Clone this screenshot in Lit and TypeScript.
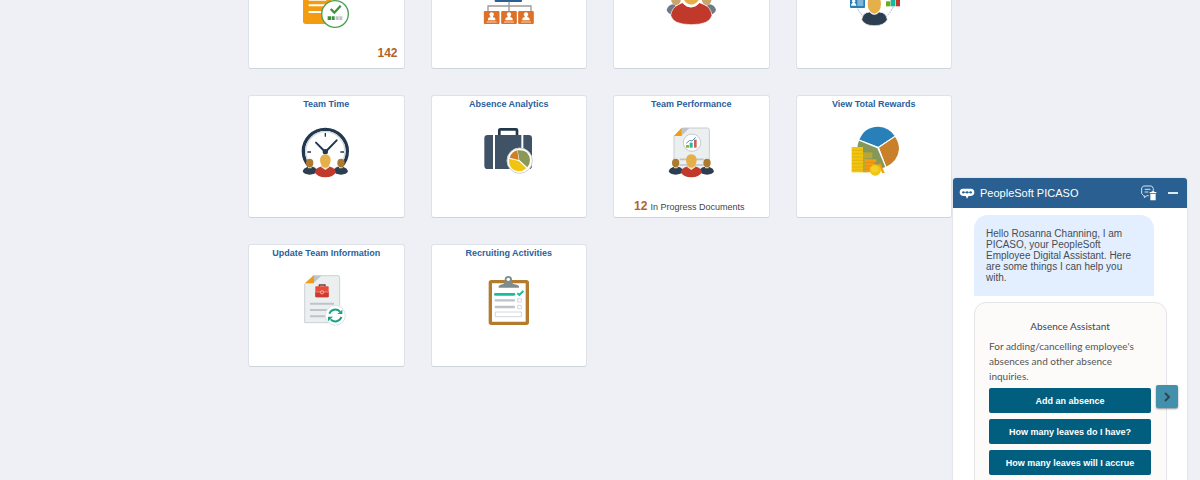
import { LitElement, html, css, svg, nothing, type TemplateResult } from "lit";
import { customElement, property } from "lit/decorators.js";

interface Tile {
  title?: string;
  label: string;
  icon: TemplateResult;
  count?: number;
  note?: string;
}

const icon = (x: number, y: number, body: TemplateResult) =>
  html`<svg class="icon" viewBox="${x} ${y} 168 168" aria-hidden="true">${body}</svg>`;

const checklist = icon(177, -81, svg`
  <path d="M192-60H276V72H200Q192 72 192 64Z" fill="#f39c12"/>
  <path d="M209-1H262M209 16H262M209 36H250" stroke="#fff" stroke-width="6"/>
  <circle cx="288" cy="42" r="40" fill="#fff" stroke="#4c9f50" stroke-width="4"/>
  <path d="M275 27L286 38L305 17" fill="none" stroke="#3f9142" stroke-width="7"/>
  <path d="M266 49h10v11h-10zM278 49h9v11h-9z" fill="#3f9142"/>
  <path d="M290 49h9v11h-9zM301 49h9v11h-9z" fill="#bfc4c4"/>`);

const orgChart = icon(723, -81, svg`
  <rect x="764" y="-40" width="82" height="46" rx="3" fill="#2c5f93"/>
  <path d="M807 5V34M744 34V18H873V34" fill="none" stroke="#9a9a9a" stroke-width="4"/>
  ${[755, 807, 858].map((x) => svg`
    <rect x=${x - 23.5} y="33" width="47" height="39" rx="3" fill="#de7128"/>
    <circle cx=${x} cy="43" r="6.5" fill="#fff"/>
    <path d="M${x - 11} 61V56Q${x - 9} 52 ${x - 4} 52V48H${x + 4}V52Q${x + 9} 52 ${x + 11} 56V61Z" fill="#fff"/>
    <path d="M${x - 15} 66H${x + 15}" stroke="#f6d0b6" stroke-width="3"/>`)}`);

const people = icon(189, -81, svg`
  <ellipse cx="228" cy="-5" rx="15" ry="21" fill="#c9a46c"/>
  <ellipse cx="320" cy="-5" rx="15" ry="21" fill="#c9a46c"/>
  <path d="M200 29Q206 14 219 13L236 22V44H216Q202 40 200 29ZM348 29Q342 14 329 13L312 22V44H332Q346 40 348 29Z" fill="#6d7b88"/>
  <path d="M212 46Q216 22 235 14L247 8Q273 35 299 8L313 14Q332 22 336 46Q330 74 274 74Q218 74 212 46Z" fill="#c0392b" stroke="#fff" stroke-width="2"/>
  <ellipse cx="274" cy="-20" rx="27" ry="34" fill="#e5b04a"/>`);

const profile = icon(735, -81, svg`
  <path d="M766 20Q790 65 820 65Q858 62 878 18" fill="none" stroke="#a8acb8" stroke-width="3" stroke-dasharray="5 3"/>
  <rect x="747" y="-22" width="45" height="46" rx="3" fill="#2980b9"/>
  <circle cx="758" cy="4" r="5" fill="#fff"/>
  <path d="M750 17Q751 8 758 8Q765 8 766 17Z" fill="#fff"/>
  <path d="M769 3H787M769 9H787M769 15H787" stroke="#d8eaf6" stroke-width="3"/>
  <path d="M855 4h13v15h-13z" fill="#69ad17"/>
  <path d="M869-20h13v39h-13z" fill="#16b99a"/>
  <path d="M884-2h13v21h-13z" fill="#c0392b"/>
  <path d="M782 59Q784 43 796 38L806 36Q820 51 834 36L845 38Q857 43 859 59Q850 77 820 77Q790 77 782 59Z" fill="#2c3e50" stroke="#fff" stroke-width="2"/>
  <ellipse cx="820" cy="12" rx="20" ry="29" fill="#e5b04a"/>`);

const team = (x: number) => svg`
  <g transform="translate(${x} 0)">
    <path d="M-68 244Q-66 235-56 232L-47 230L-34 232Q-25 236-25 244Q-30 254-47 254Q-64 254-68 244Z" fill="#2c3e50"/>
    <path d="M68 244Q66 235 56 232L47 230L34 232Q25 236 25 244Q30 254 47 254Q64 254 68 244Z" fill="#2c3e50"/>
    <path d="M-52 225h11v10h-11zM41 225h11v10H41z" fill="#dcd3b6"/>
    <ellipse cx="-47" cy="219" rx="11" ry="12.5" fill="#ad7b30"/>
    <ellipse cx="47" cy="219" rx="11" ry="12.5" fill="#ad7b30"/>
    <path d="M-32 247Q-29 234-14 230L-8 225H8L14 230Q29 234 32 247Q24 262 0 262Q-24 262-32 247Z" fill="#c0392b"/>
    <path d="M-14 230L-8 226H8L14 230L0 240Z" fill="#f3e3c4"/>
    <path d="M0 193Q16 194 16 211Q14 226 8 230Q0 236-8 230Q-14 226-16 211Q-16 194 0 193Z" fill="#e5b04a"/>
  </g>`;

const clock = icon(57, 96, svg`
  <circle cx="139" cy="184" r="66" fill="#fff" stroke="#22384f" stroke-width="10"/>
  <circle cx="139" cy="184" r="59" fill="none" stroke="#d4d7da" stroke-width="4"/>
  <path d="M139 129V140M85 186H96M184 186H195" stroke="#22384f" stroke-width="4"/>
  <path d="M111 158L139 186L173 151" fill="none" stroke="#22384f" stroke-width="6" stroke-linecap="round"/>
  <circle cx="139" cy="185" r="8" fill="#22384f"/>
  ${team(139)}`);

const suitcase = icon(63, 96, svg`
  <path d="M118 138V121Q118 118 122 118H168Q171 118 171 121V138" fill="none" stroke="#22384a" stroke-width="8"/>
  <rect x="73" y="135" width="143" height="102" rx="10" fill="#3f5266"/>
  <path d="M102 135V237M187 135V237" stroke="#fff" stroke-width="6"/>
  <circle cx="179" cy="212" r="38" fill="#fff" stroke="#ccd1ce" stroke-width="3"/>
  <path d="M176 210L149 203Q155 185 172 181Z" fill="#d07f24"/>
  <path d="M178 210L173 181Q206 178 210 209Q210 223 202 232Z" fill="#8a9a56"/>
  <path d="M176 213L199 235Q188 245 174 244Q145 239 147 206Z" fill="#f1c40f"/>`);

const performance = icon(159, 96, svg`
  <path d="M217 114H293Q298 114 298 119V238H192V139Z" fill="#eceff0" stroke="#c9cdd0" stroke-width="3"/>
  <path d="M215 114H238L214 138Z" fill="#bfc4c8"/>
  <path d="M215 113V138H192Z" fill="#f39c12"/>
  <circle cx="246" cy="158" r="26" fill="#fff" stroke="#c6cacc" stroke-width="3"/>
  <path d="M228 165h9v8h-9z" fill="#7fb93c"/><path d="M239 158h9v15h-9z" fill="#26b899"/><path d="M252 149h8v24h-8z" fill="#cf6159"/>
  <path d="M229 160L239 151L246 153L257 142" fill="none" stroke="#4d8fc0" stroke-width="3"/>
  <path d="M209 208H281M209 225H281" stroke="#bdc3c7" stroke-width="5"/>
  ${team(244)}`);

const rewards = icon(75, 96, svg`
  <path d="M171 171L115 150Q129 111 172 110Q205 112 221 138Z" fill="#2980b9"/>
  <path d="M174 173L222 140Q234 158 234 178Q230 215 195 230Z" fill="#c9802b"/>
  <path d="M169 175L193 231Q180 237 165 235Q110 225 109 175Q110 160 114 152Z" fill="#84985a"/>
  <path d="M172 172L115 150M172 172L222 139M172 172L195 231" stroke="#fff" stroke-width="3"/>
  <path d="M92 171h34v76h-34z" fill="#f1c40f"/>
  <path d="M126 187h28v18h-28z" fill="#b8a636"/><path d="M126 205h10v42h-10z" fill="#b8a636"/>
  <path d="M92 181h34M92 191h34M92 201h34M92 211h34M92 221h34M92 231h34M92 240h34" stroke="#d9ac12" stroke-width="2"/>
  <path d="M132 208H166V217H160V247H132Z" fill="#f39c12"/>
  <path d="M132 218H164M132 228H155M132 238H155" stroke="#db8512" stroke-width="2"/>
  <path d="M171 221L178 220L191 248L184 250Z" fill="#f39c12"/>
  <circle cx="163" cy="240" r="17" fill="#f1c40f"/><circle cx="161" cy="238" r="10" fill="#f5cf2c"/>`);

const documentSync = icon(117, 93, svg`
  <path d="M163 107H237Q242 107 242 112V248H137V132Z" fill="#eceff0" stroke="#cdd1d3" stroke-width="3"/>
  <path d="M163 107H187L163 130Z" fill="#bfc4c8"/>
  <path d="M165 106V130H138Z" fill="#f39c12"/>
  <path d="M181 140V135H198V140" fill="none" stroke="#5d4644" stroke-width="4"/>
  <rect x="169" y="139" width="40" height="33" rx="3" fill="#e74c3c"/>
  <path d="M169 156H209V169Q209 172 206 172H172Q169 172 169 169Z" fill="#ca3c2f"/>
  <path d="M171 156H208" stroke="#f1a69e" stroke-width="2"/><circle cx="189" cy="157" r="5" fill="#e74c3c" stroke="#f8d3cf" stroke-width="2"/>
  <path d="M153 191H225M153 210H205M153 229H200" stroke="#bdc3c7" stroke-width="6"/>
  <circle cx="229" cy="226" r="30" fill="#fff" stroke="#dfe1e2" stroke-width="3"/>
  <path d="M211 221A19 19 0 0 1 243 215M247 231A19 19 0 0 1 215 238" fill="none" stroke="#16a085" stroke-width="6"/>
  <path d="M250 209V222H235ZM207 244V230H222Z" fill="#16a085"/>`);

const clipboard = icon(93, 93, svg`
  <rect x="121" y="125" width="111" height="125" rx="3" fill="#fff" stroke="#b27b2d" stroke-width="10"/>
  <path d="M146 143V138Q150 133 160 132Q165 130 164 119A11 11 0 0 1 186 119Q185 130 190 132Q202 133 207 138V143Z" fill="#7f8c8d"/>
  <circle cx="175" cy="118" r="5" fill="#fff"/>
  <path d="M136 163H192" stroke="#1abc9c" stroke-width="8" stroke-linecap="round"/>
  <path d="M202 160L208 165L220 153" fill="none" stroke="#1abc9c" stroke-width="6"/>
  <path d="M137 181H192M137 201H192" stroke="#bdc3c7" stroke-width="7" stroke-linecap="round"/>
  <path d="M203 176h11v10h-11zM203 196h11v10h-11zM136 216h78v14h-78z" fill="#fff" stroke="#d3d7d9" stroke-width="3"/>`);

const tiles: Tile[] = [
  { label: "Approvals", icon: checklist, count: 142 },
  { label: "Organization", icon: orgChart },
  { label: "Team", icon: people },
  { label: "Profile", icon: profile },
  { label: "Team Time", title: "Team Time", icon: clock },
  { label: "Absence Analytics", title: "Absence Analytics", icon: suitcase },
  { label: "Team Performance", title: "Team Performance", icon: performance, count: 12, note: "In Progress Documents" },
  { label: "View Total Rewards", title: "View Total Rewards", icon: rewards },
  { label: "Update Team Information", title: "Update Team Information", icon: documentSync },
  { label: "Recruiting Activities", title: "Recruiting Activities", icon: clipboard },
];

@customElement("home-tile")
export class HomeTile extends LitElement {
  @property({ attribute: false }) tile!: Tile;

  static styles = css`
    :host { display: block; min-width: 0; }
    .tile {
      box-sizing: border-box;
      height: 100%;
      display: grid;
      grid-template-rows: 26px 56px 1fr;
      justify-items: center;
      background: #fff;
      border: 1px solid #dde2e8;
      border-bottom-color: #ccd5db;
      border-radius: 3px;
      color: #444;
      text-decoration: none;
    }
    .title { font-size: 9px; line-height: 17px; font-weight: 700; color: #2a5f9e; margin: 0; white-space: nowrap; }
    .icon { width: 56px; height: 56px; }
    .foot { align-self: end; display: flex; align-items: baseline; gap: 3px; font-size: 9px; line-height: 20px; white-space: nowrap; padding-right: 4px; }
    .end { justify-self: end; padding-right: 6px; line-height: 30px; }
    .count { font-size: 12px; font-weight: 700; color: #b0642a; }
  `;

  render() {
    const t = this.tile;
    return html`<a class="tile" href="#" aria-label=${t.label}>
      <h2 class="title">${t.title ?? nothing}</h2>
      ${t.icon}
      ${t.count
        ? html`<span class="foot ${t.note ? "" : "end"}"><span class="count">${t.count}</span>${t.note ?? nothing}</span>`
        : nothing}
    </a>`;
  }
}

@customElement("chat-panel")
export class ChatPanel extends LitElement {
  static styles = css`
    :host { display: flex; flex-direction: column; background: #fff; border-radius: 3px 3px 0 0; box-shadow: 0 0 2px #c5cad2; overflow: hidden; }
    .header { display: flex; align-items: center; gap: 5px; height: 30px; flex: none; padding: 0 8px 0 6px; background: #2a6091; color: #fff; }
    .name { flex: 1; margin: 0; font-size: 11px; font-weight: 400; white-space: nowrap; }
    button { font-family: inherit; cursor: pointer; border: 0; margin: 0; padding: 0; }
    .tool { display: flex; background: none; color: #fff; }
    .tools { display: flex; align-items: center; gap: 10px; }
    .body { flex: 1; min-height: 0; padding: 7px 20px 0 21px; overflow: hidden; }
    .message { box-sizing: border-box; margin: 0 13px 6px 0; padding: 13px 12px; background: #e3efff; border-radius: 14px 14px 0 0; color: #484c52; font-size: 10px; line-height: 11px; }
    .card { position: relative; padding: 16px 15px 20px 14px; background: #fcfbfa; border: 1px solid #e4e5e8; border-radius: 12px; font-family: Lato, "Noto Sans", sans-serif; color: #555; font-size: 10px; line-height: 15px; }
    .heading { margin: 0 0 5px; font-size: 10px; font-weight: 400; text-align: center; color: #444; }
    .text { margin: 0 0 4px; }
    .actions { display: grid; gap: 6px; }
    .action { height: 25px; border-radius: 2px; background: #025e7e; color: #fff; font: 700 9px "Liberation Sans", Arial, sans-serif; white-space: nowrap; }
    .next { position: absolute; right: -12px; top: 82px; width: 22px; height: 23px; display: grid; place-items: center; border-radius: 2px; background: #4390ac; box-shadow: 0 1px 2px #8a9499; }
  `;

  render() {
    return html`
      <header class="header">
        <svg width="16" height="12" viewBox="0 0 48 36" aria-hidden="true">
          <path d="M12 5H36Q46 6 46 16Q46 26 36 27H29L24 35L20 27H12Q2 26 2 16Q2 6 12 5Z" fill="#fff"/>
          <path d="M12 16H36" stroke="#2a6091" stroke-width="2"/>
          <circle cx="13" cy="16" r="3.5" fill="#2a6091"/><circle cx="24" cy="16" r="3.5" fill="#2a6091"/><circle cx="35" cy="16" r="3.5" fill="#2a6091"/>
        </svg>
        <h1 class="name">PeopleSoft PICASO</h1>
        <div class="tools">
          <button class="tool" aria-label="Clear conversation">
            <svg width="16" height="16" viewBox="0 0 48 48" fill="none" stroke="#d7e4f0" stroke-width="3">
              <path d="M37 17V10L32 3H7L2 9V26L8 32H10V38L18 32H23"/>
              <path d="M11 13H28M11 21H22"/>
              <path d="M26 21H46V25H26ZM28 27H44V46H28Z" fill="#fff" stroke="none"/>
              <path d="M32 19H40" stroke="#fff"/>
            </svg>
          </button>
          <button class="tool" aria-label="Minimize">
            <svg width="12" height="12" viewBox="0 0 12 12"><path d="M1 6H11" stroke="#dce8f2" stroke-width="2"/></svg>
          </button>
        </div>
      </header>
      <div class="body">
        <p class="message">Hello Rosanna Channing, I am PICASO, your PeopleSoft Employee Digital Assistant. Here are some things I can help you with.</p>
        <section class="card">
          <h2 class="heading">Absence Assistant</h2>
          <p class="text">For adding/cancelling employee's absences and other absence inquiries.</p>
          <div class="actions">
            <button class="action">Add an absence</button>
            <button class="action">How many leaves do I have?</button>
            <button class="action">How many leaves will I accrue</button>
          </div>
          <button class="next" aria-label="Next">
            <svg width="8" height="10" viewBox="0 0 8 10"><path d="M2 1L6 5L2 9" fill="none" stroke="#2d4652" stroke-width="2"/></svg>
          </button>
        </section>
      </div>`;
  }
}

@customElement("app-root")
export class AppRoot extends LitElement {
  static styles = css`
    :host { display: block; position: relative; height: 100vh; overflow: hidden; background: #eef0f5; font-family: "Liberation Sans", Arial, sans-serif; }
    .tiles { display: grid; grid-template-columns: repeat(4, minmax(0, 1fr)); grid-auto-rows: 123px; gap: 26px; max-width: 704px; margin: -54px auto 0; }
    .chat { position: absolute; right: 13px; top: 178px; bottom: 0; width: 234px; }
  `;

  render() {
    return html`
      <main class="tiles">${tiles.map((t) => html`<home-tile .tile=${t}></home-tile>`)}</main>
      <chat-panel class="chat"></chat-panel>`;
  }
}
